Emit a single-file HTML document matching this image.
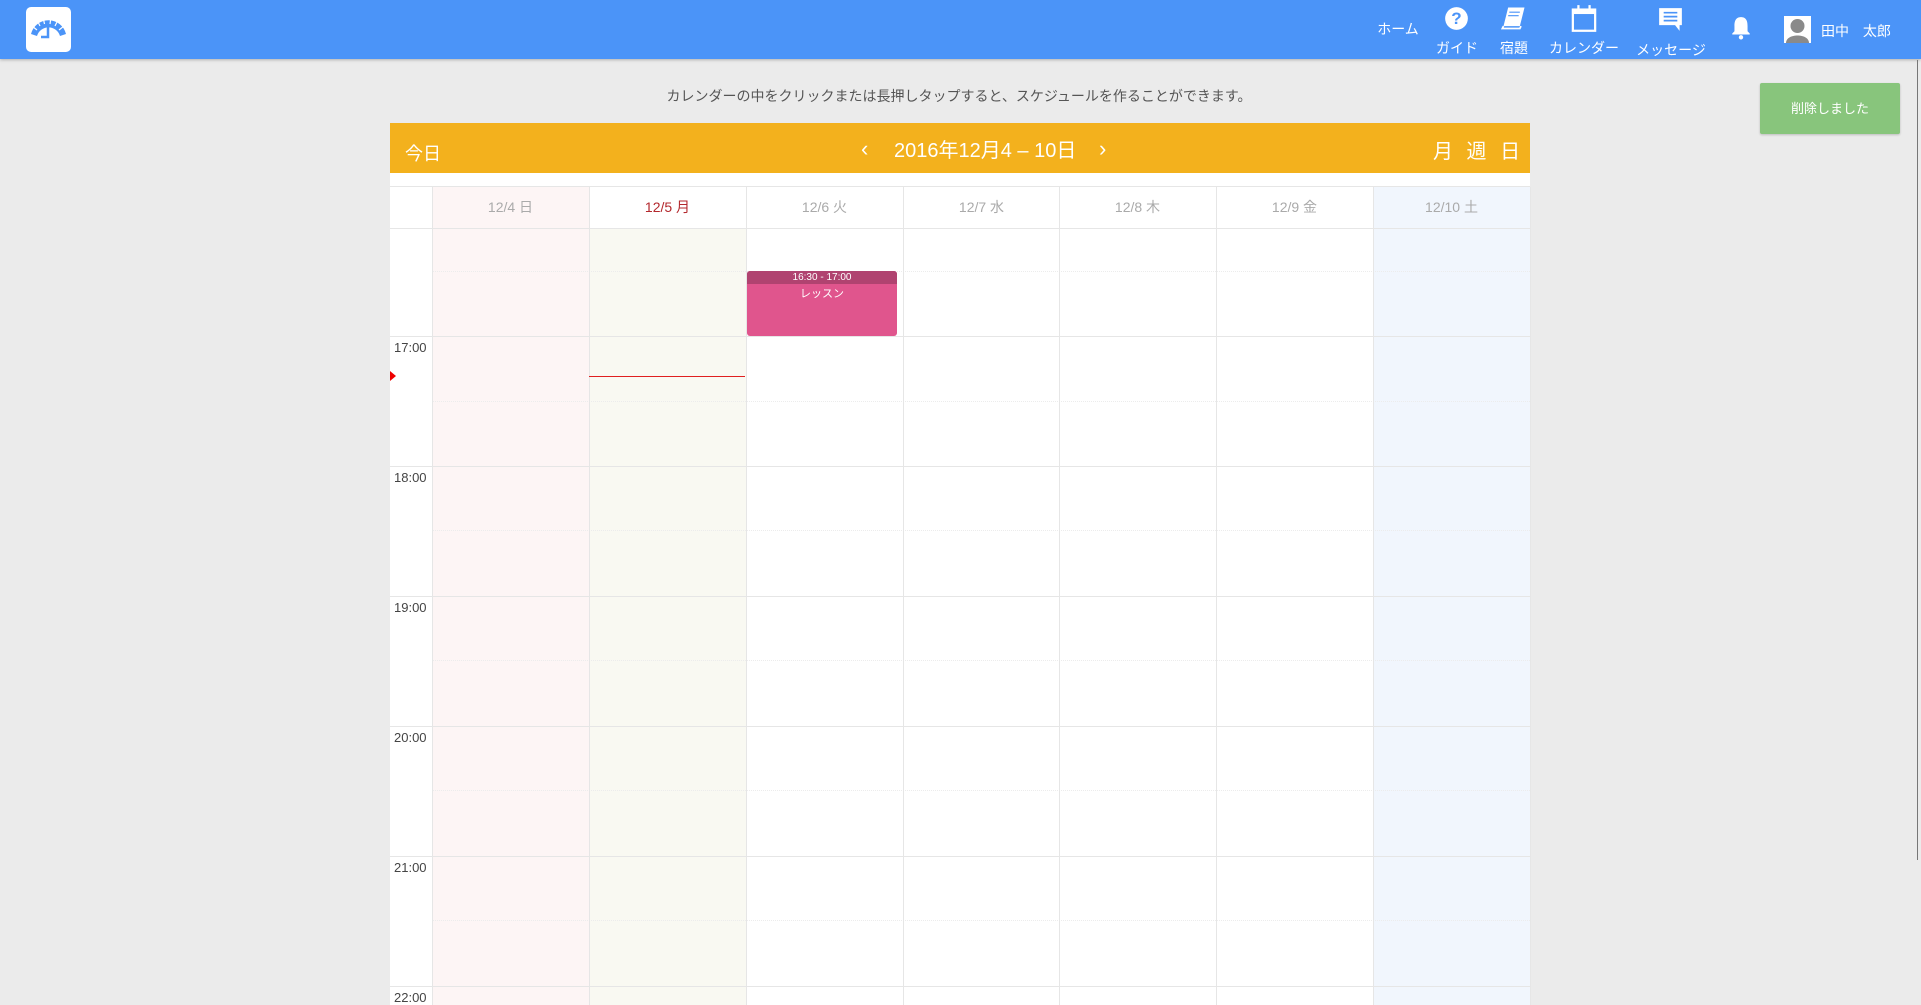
<!DOCTYPE html>
<html><head><meta charset="utf-8"><style>
*{margin:0;padding:0;box-sizing:border-box}
body{width:1921px;height:1005px;overflow:hidden;background:#ebebeb;font-family:"Liberation Sans","Noto Sans CJK JP",sans-serif;position:relative}
.a{position:absolute}
.hdr{left:0;top:0;width:1921px;height:59px;background:#4b94f8;box-shadow:0 1px 3px rgba(0,0,0,.25)}
.nav{color:#fff;font-size:14px;white-space:nowrap;transform:translateX(-50%)}
.cal{left:390px;top:123px;width:1140px;height:882px;background:#fff}
.hl{left:390px;width:1140px;height:1px;background:#e6e6e6}
.dl{left:432px;width:1098px;height:0;border-top:1px dotted #ececec}
.vl{width:1px;background:#e6e6e6;top:187px;height:818px}
.dh{top:187px;height:41px;width:157px;text-align:center;line-height:41px;font-size:14px;color:#aaa}
.tm{left:394px;font-size:13px;color:#444}
</style></head><body>
<div class="a hdr"></div>
<div class="a" style="left:26px;top:7px;width:45px;height:45px;background:#fff;border-radius:5px">
<svg width="45" height="45" viewBox="0 0 45 45"><path d="M5 27 A18 18 0 0 1 40 27 L34 29 A12 12 0 0 0 11 29 Z" fill="#4b94f8"/><path d="M22 18 V30 H15" stroke="#4b94f8" stroke-width="2.5" fill="none"/><g stroke="#fff" stroke-width="1.2"><line x1="11" y1="13" x2="14" y2="19"/><line x1="17" y1="10" x2="18.5" y2="17"/><line x1="25" y1="10" x2="24" y2="17"/><line x1="32" y1="13" x2="29" y2="19"/><line x1="6" y1="19" x2="11" y2="23"/><line x1="38" y1="19" x2="33" y2="23"/></g></svg></div>
<div class="a nav" style="left:1398px;top:19px">ホーム</div>
<svg class="a" style="left:1444px;top:6px" width="25" height="25" viewBox="0 0 22 22"><circle cx="11" cy="11" r="10" fill="#fff"/><text x="11" y="16" font-size="15" font-weight="bold" text-anchor="middle" fill="#4b94f8" font-family="Liberation Sans">?</text></svg>
<div class="a nav" style="left:1457px;top:38px">宿題</div>
<div class="a nav" style="left:1457px;top:38px;background:#4b94f8">ガイド</div>
<svg class="a" style="left:1500px;top:4px" width="28" height="28" viewBox="0 0 24 24"><path d="M7 3 H21 L17 19 H3 Z" fill="#fff"/><path d="M3 19 L2 21 H17 L18 19" stroke="#fff" stroke-width="1.5" fill="none"/><path d="M8 7 H17 M7 10 H16" stroke="#4b94f8" stroke-width="1"/></svg>
<div class="a nav" style="left:1514px;top:38px">宿題</div>
<svg class="a" style="left:1570px;top:4px" width="28" height="29" viewBox="0 0 24 26"><rect x="2" y="5" width="20" height="19" fill="none" stroke="#fff" stroke-width="2"/><rect x="2" y="5" width="20" height="4" fill="#fff"/><rect x="6" y="1" width="2" height="6" fill="#fff"/><rect x="16" y="1" width="2" height="6" fill="#fff"/></svg>
<div class="a nav" style="left:1584px;top:38px">カレンダー</div>
<svg class="a" style="left:1658px;top:7px" width="25" height="25" viewBox="0 0 22 22"><path d="M1 1 H21 V16 H19 V21 L15 16 H1 Z" fill="#fff"/><path d="M5 5 H17 M5 8.5 H17 M5 12 H17" stroke="#4b94f8" stroke-width="1.5"/></svg>
<div class="a nav" style="left:1671px;top:40px">メッセージ</div>
<svg class="a" style="left:1731px;top:16px" width="20" height="24" viewBox="0 0 18 22"><path d="M9 1 C4 1 3 5 3 9 V14 L1 16 V17 H17 V16 L15 14 V9 C15 5 14 1 9 1 Z" fill="#fff"/><circle cx="9" cy="19.5" r="2" fill="#fff"/></svg>
<div class="a" style="left:1784px;top:16px;width:27px;height:27px;background:#fff"><svg width="27" height="27"><circle cx="13.5" cy="10" r="7" fill="#8a8a8a"/><path d="M2 27 C2 17 25 17 25 27 Z" fill="#8a8a8a"/></svg></div>
<div class="a" style="left:1821px;top:21px;color:#fff;font-size:14px;word-spacing:10px">田中 太郎</div>
<div class="a" style="left:1917px;top:60px;width:1px;height:800px;background:#777"></div>

<div class="a" style="left:0;width:1918px;top:86px;text-align:center;font-size:14px;color:#555">カレンダーの中をクリックまたは長押しタップすると、スケジュールを作ることができます。</div>
<div class="a" style="left:1760px;top:83px;width:140px;height:51px;background:#88c57c;border-radius:2px;box-shadow:0 1px 2px rgba(0,0,0,.2);color:#fff;font-size:13px;text-align:center;line-height:51px">削除しました</div>

<div class="a cal"></div>
<div class="a" style="left:390px;top:123px;width:1140px;height:50px;background:#f3b11d"></div>
<div class="a" style="left:405px;top:140px;color:#fff;font-size:18px">今日</div>
<div class="a" style="left:861px;top:136px;color:#fff;font-size:22px">‹</div>
<div class="a" style="left:894px;top:134px;color:#fff;font-size:20px">2016年12月4 – 10日</div>
<div class="a" style="left:1099px;top:136px;color:#fff;font-size:22px">›</div>
<div class="a" style="left:1433px;top:135px;color:#fff;font-size:20px;word-spacing:8px">月 週 日</div>

<div class="a" style="left:432px;top:187px;width:157px;height:818px;background:#fdf5f5"></div>
<div class="a" style="left:589px;top:228px;width:157px;height:777px;background:#f9f9f2"></div>
<div class="a" style="left:1373px;top:187px;width:157px;height:818px;background:#f1f6fd"></div>

<div class="a hl" style="top:186px"></div>
<div class="a hl" style="top:228px"></div>
<div class="a dl" style="top:271px"></div><div class="a hl" style="top:336px"></div>
<div class="a dl" style="top:401px"></div><div class="a hl" style="top:466px"></div>
<div class="a dl" style="top:530px"></div><div class="a hl" style="top:596px"></div>
<div class="a dl" style="top:660px"></div><div class="a hl" style="top:726px"></div>
<div class="a dl" style="top:790px"></div><div class="a hl" style="top:856px"></div>
<div class="a dl" style="top:920px"></div><div class="a hl" style="top:986px"></div>

<div class="a vl" style="left:432px"></div><div class="a vl" style="left:589px"></div><div class="a vl" style="left:746px"></div><div class="a vl" style="left:903px"></div><div class="a vl" style="left:1059px"></div><div class="a vl" style="left:1216px"></div><div class="a vl" style="left:1373px"></div><div class="a vl" style="left:1530px"></div>

<div class="a dh" style="left:432px">12/4 日</div>
<div class="a dh" style="left:589px;color:#b3282d">12/5 月</div>
<div class="a dh" style="left:746px">12/6 火</div>
<div class="a dh" style="left:903px">12/7 水</div>
<div class="a dh" style="left:1059px">12/8 木</div>
<div class="a dh" style="left:1216px">12/9 金</div>
<div class="a dh" style="left:1373px">12/10 土</div>

<div class="a tm" style="top:340px">17:00</div>
<div class="a tm" style="top:470px">18:00</div>
<div class="a tm" style="top:600px">19:00</div>
<div class="a tm" style="top:730px">20:00</div>
<div class="a tm" style="top:860px">21:00</div>
<div class="a tm" style="top:990px">22:00</div>

<div class="a" style="left:747px;top:271px;width:150px;height:65px;background:#e0558d;border-radius:3px;overflow:hidden;color:#fff;text-align:center">
<div style="height:13px;background:#b04370;font-size:10px;line-height:13px">16:30 - 17:00</div>
<div style="font-size:11px;margin-top:1px">レッスン</div></div>

<div class="a" style="left:589px;top:376px;width:156px;height:1px;background:#e02020"></div>
<div class="a" style="left:390px;top:371px;width:0;height:0;border-top:5px solid transparent;border-bottom:5px solid transparent;border-left:6px solid #e00"></div>
</body></html>
